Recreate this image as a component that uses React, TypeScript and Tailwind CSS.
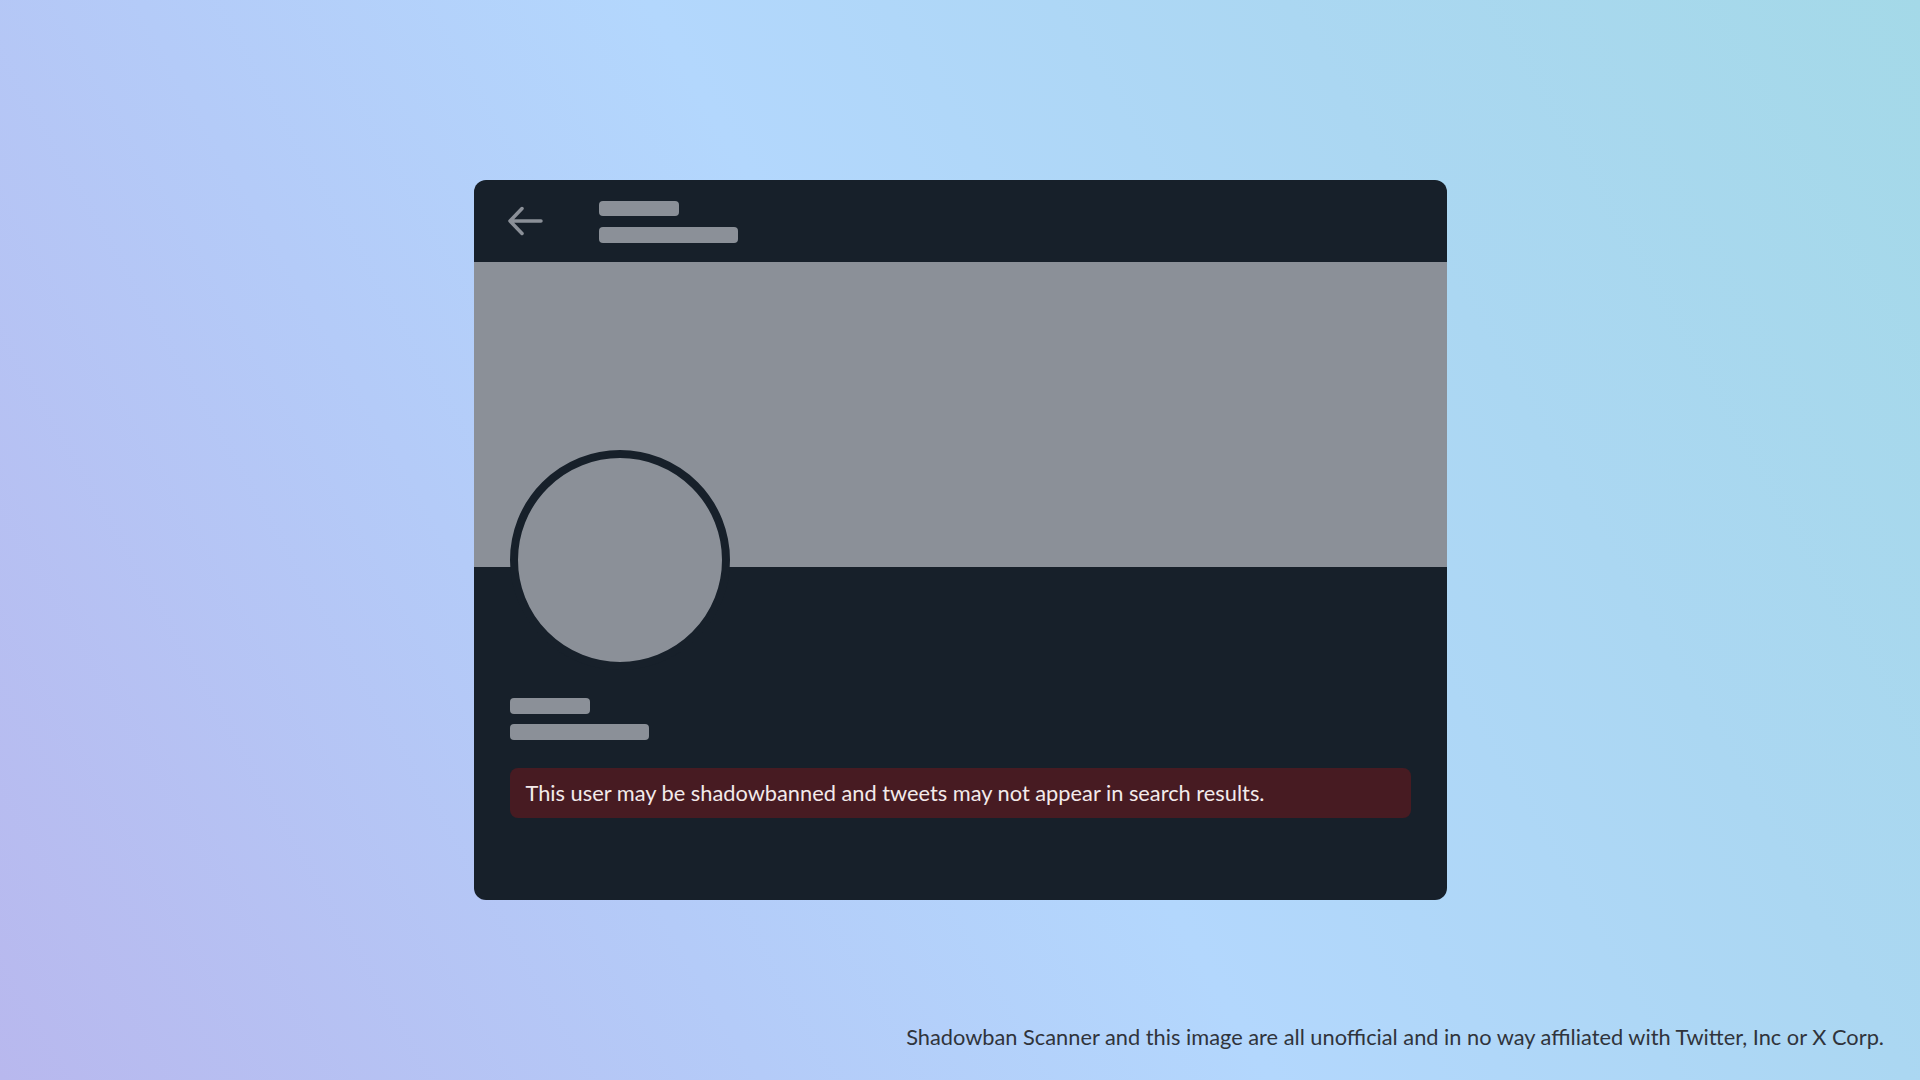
import React from "react";

export default function App() {
  return (
    <div
      className="w-[1920px] h-[1080px] grid grid-rows-[180px_720px_180px] justify-items-center overflow-hidden bg-[linear-gradient(60deg,#b8b8ee_0%,#b4cbf8_30%,#b3d7fd_50%,#abd7f2_75%,#a4d9e8_100%)]"
      style={{ fontFamily: "Lato, 'Noto Sans', sans-serif" }}
    >
      <div />
      <div className="w-[973px] h-[720px] rounded-[12px] bg-[#17202a] overflow-hidden flex flex-col">
        <div className="h-[82px] flex items-center pl-[33px] shrink-0">
          <svg width="36" height="30" viewBox="0 0 36 30" fill="none" className="shrink-0">
            <path
              d="M3 15H34M15 2.5L3 15L15 27.5"
              stroke="#8b9098"
              strokeWidth="3.5"
              strokeLinecap="round"
              strokeLinejoin="round"
            />
          </svg>
          <div className="ml-[56px] flex flex-col gap-[11px] pt-[1px]">
            <div className="w-[80px] h-[15px] rounded-[4px] bg-[#8b9098]" />
            <div className="w-[139px] h-[16px] rounded-[4px] bg-[#8b9098]" />
          </div>
        </div>
        <div className="h-[305px] bg-[#8b9098] shrink-0" />
        <div className="px-[36px] flex flex-col">
          <div className="-mt-[117px] w-[220px] h-[220px] rounded-full border-[8px] border-[#17202a] bg-[#8b9098]" />
          <div className="mt-[28px] w-[80px] h-[16px] rounded-[4px] bg-[#8b9098]" />
          <div className="mt-[10px] w-[139px] h-[16px] rounded-[4px] bg-[#8b9098]" />
          <div className="mt-[28px] h-[50px] rounded-[8px] bg-[#471b22] flex items-center pl-[16px] text-[21.8px] text-[#f3eaea]">
            This user may be shadowbanned and tweets may not appear in search results.
          </div>
        </div>
      </div>
      <div className="w-full flex items-end justify-end pr-[36px] pb-[28px]">
        <p className="text-[21.8px] leading-[30px] text-[#30343c] whitespace-nowrap">
          Shadowban Scanner and this image are all unofficial and in no way affiliated with Twitter, Inc or X Corp.
        </p>
      </div>
    </div>
  );
}
